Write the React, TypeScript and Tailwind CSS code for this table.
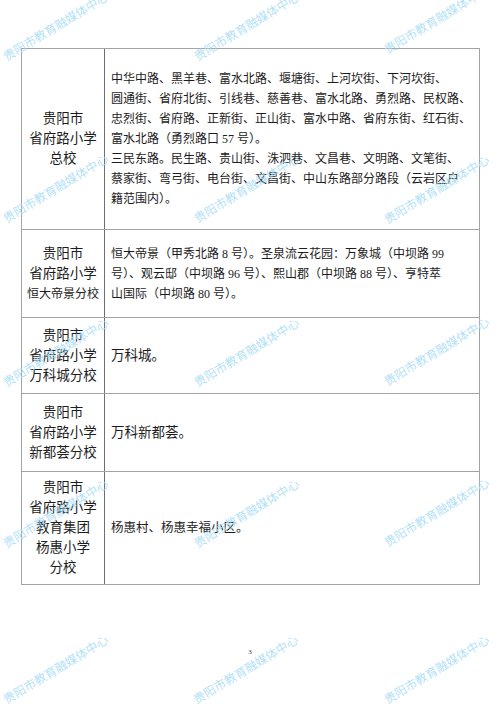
type Row = {
  height: string;
  label: { text: string; size: string }[];
  lines: string[];
  textSize: string;
};

const LABEL = "text-[13.5px]";
const SMALL = "text-[12px]";

const ROWS: Row[] = [
  {
    height: "h-[180px]",
    label: [
      { text: "贵阳市", size: LABEL },
      { text: "省府路小学", size: LABEL },
      { text: "总校", size: LABEL },
    ],
    lines: [
      "中华中路、黑羊巷、富水北路、堰塘街、上河坎街、下河坎街、",
      "圆通街、省府北街、引线巷、慈善巷、富水北路、勇烈路、民权路、",
      "忠烈街、省府路、正新街、正山街、富水中路、省府东街、红石街、",
      "富水北路（勇烈路口 57 号）。",
      "三民东路。民生路、贵山街、洙泗巷、文昌巷、文明路、文笔街、",
      "蔡家街、弯弓街、电台街、文昌街、中山东路部分路段（云岩区户",
      "籍范围内）。",
    ],
    textSize: "text-[12px]",
  },
  {
    height: "h-[88px]",
    label: [
      { text: "贵阳市", size: LABEL },
      { text: "省府路小学", size: LABEL },
      { text: "恒大帝景分校", size: SMALL },
    ],
    lines: [
      "恒大帝景（甲秀北路 8 号）。圣泉流云花园：万象城（中坝路 99",
      "号）、观云邸（中坝路 96 号）、熙山郡（中坝路 88 号）、亨特萃",
      "山国际（中坝路 80 号）。",
    ],
    textSize: "text-[12px]",
  },
  {
    height: "h-[76px]",
    label: [
      { text: "贵阳市", size: LABEL },
      { text: "省府路小学", size: LABEL },
      { text: "万科城分校", size: LABEL },
    ],
    lines: ["万科城。"],
    textSize: "text-[13.5px]",
  },
  {
    height: "h-[78px]",
    label: [
      { text: "贵阳市", size: LABEL },
      { text: "省府路小学", size: LABEL },
      { text: "新都荟分校", size: LABEL },
    ],
    lines: ["万科新都荟。"],
    textSize: "text-[13.5px]",
  },
  {
    height: "h-[113px]",
    label: [
      { text: "贵阳市", size: LABEL },
      { text: "省府路小学", size: LABEL },
      { text: "教育集团", size: LABEL },
      { text: "杨惠小学", size: LABEL },
      { text: "分校", size: LABEL },
    ],
    lines: ["杨惠村、杨惠幸福小区。"],
    textSize: "text-[12.5px]",
  },
];

// bottom-left corner of each watermark, rotated about that corner
const MARKS = [
  "left-[7px] top-[50px]",
  "left-[198px] top-[50px]",
  "left-[388px] top-[43px]",
  "left-[7px] top-[212px]",
  "left-[198px] top-[212px]",
  "left-[388px] top-[213px]",
  "left-[7px] top-[376px]",
  "left-[198px] top-[376px]",
  "left-[388px] top-[375px]",
  "left-[7px] top-[537px]",
  "left-[198px] top-[537px]",
  "left-[388px] top-[536px]",
  "left-[7px] top-[693px]",
  "left-[197px] top-[693px]",
  "left-[388px] top-[693px]",
];

const Watermark = ({ pos }: { pos: string }) => (
  <span
    className={`pointer-events-none absolute ${pos} origin-bottom-left -rotate-[31deg] whitespace-nowrap font-['Noto_Sans_CJK_SC',sans-serif] text-[12px] leading-[12px] text-[#a9ddf6]/90`}
  >
    贵阳市教育融媒体中心
  </span>
);

export default function App() {
  return (
    <div className="relative h-[706px] w-[500px] overflow-hidden bg-white font-['Liberation_Serif','Noto_Sans_CJK_SC',serif] text-[#1c1c1c]">
      <div className="pt-[48px] pl-[21px]">
        <div className="w-[459px] border border-[#a3a3a3]">
          {ROWS.map((row, i) => (
            <div
              key={i}
              className={`grid grid-cols-[83px_1fr] ${row.height} ${i > 0 ? "border-t border-[#a3a3a3]" : ""}`}
            >
              <div className="flex flex-col items-center justify-center border-r border-[#6f6f6f] leading-[20px]">
                {row.label.map((l, j) => (
                  <div key={j} className={`${l.size} whitespace-nowrap`}>
                    {l.text}
                  </div>
                ))}
              </div>
              <div className={`flex flex-col justify-center pl-[6px] leading-[20px] ${row.textSize}`}>
                {row.lines.map((line, j) => (
                  <div key={j} className="whitespace-nowrap">
                    {line}
                  </div>
                ))}
              </div>
            </div>
          ))}
        </div>
      </div>

      <div className="mt-[64px] text-center text-[7px] leading-none text-[#333]">3</div>

      {MARKS.map((pos) => (
        <Watermark key={pos} pos={pos} />
      ))}
    </div>
  );
}
